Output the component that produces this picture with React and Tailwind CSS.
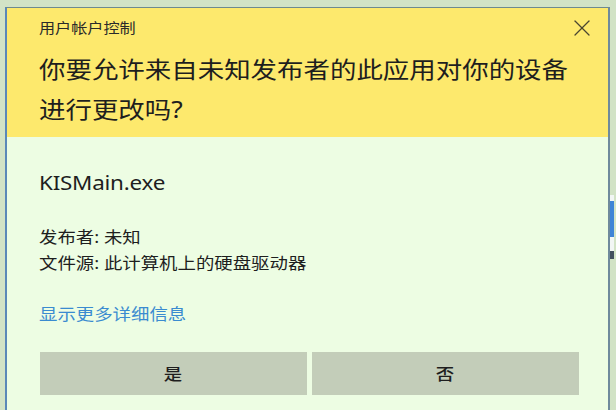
import { X } from "lucide-react";

const FONT = "font-['Noto_Sans','Noto_Sans_CJK_SC',sans-serif]";
// the screenshot is slightly stretched sideways, so text is widened to match
const WIDE = "self-start origin-left scale-x-[1.15]";

export default function App() {
  return (
    <div className={`flex h-[410px] w-[616px] overflow-hidden bg-[#d2e3c6] pl-[5px] pt-[7px] ${FONT}`}>
      <div className="flex h-[420px] w-[605px] shrink-0 flex-col border-l-2 border-t border-r-2 border-l-[#5a88b8] border-t-[#6f8a8e] border-r-[#6f8a9c] bg-[#edfde3]">
        <div className="flex flex-col bg-[#fde96d] pb-[8px] pl-[32px] pr-[12px] pt-[9px]">
          <div className="flex h-[22px] items-center justify-between">
            <span className={`inline-block ${WIDE} text-[14px] leading-[22px] text-[#2a2a2a]`}>用户帐户控制</span>
            <X className="-my-[4px] h-[28px] w-[28px] text-[#4a4630]" strokeWidth={1.1} />
          </div>
          <h1 className={`${WIDE} mt-[10px] text-[23px] leading-[40px] text-[#1e1e1e]`}>
            你要允许来自未知发布者的此应用对你的设备
            <br />
            进行更改吗?
          </h1>
        </div>
        <div className="flex flex-col pl-[32px] pr-[28px] pt-[32px]">
          <p className={`${WIDE} text-[19.5px] leading-[28px] tracking-[-0.2px] text-[#1e1e1e]`}>KISMain.exe</p>
          <div className={`${WIDE} mt-[27px] flex flex-col text-[16px] leading-[26px] text-[#1e1e1e]`}>
            <span>发布者: 未知</span>
            <span>文件源: 此计算机上的硬盘驱动器</span>
          </div>
          <p className={`${WIDE} mt-[25px] text-[16px] leading-[26px] text-[#3a8bd0]`}>显示更多详细信息</p>
          <div className="mt-[25px] flex gap-[5px] pl-px">
            <button className="flex h-[43px] w-[267px] items-center justify-center bg-[#c3cdb9] text-[#1e1e1e]">
              <span className="inline-block scale-x-[1.15] text-[16px] font-medium">是</span>
            </button>
            <button className="flex h-[43px] w-[267px] items-center justify-center bg-[#c3cdb9] text-[#1e1e1e]">
              <span className="inline-block scale-x-[1.15] text-[16px] font-medium">否</span>
            </button>
          </div>
        </div>
      </div>
      <div className="flex w-[4px] flex-col pt-[188px]">
        <div className="h-[6px] bg-[#f2f6f4]" />
        <div className="h-[36px] bg-[#3f84d6]" />
        <div className="h-[14px] bg-[#f2f6f4]" />
        <div className="h-[8px] bg-[#445060]" />
      </div>
    </div>
  );
}
